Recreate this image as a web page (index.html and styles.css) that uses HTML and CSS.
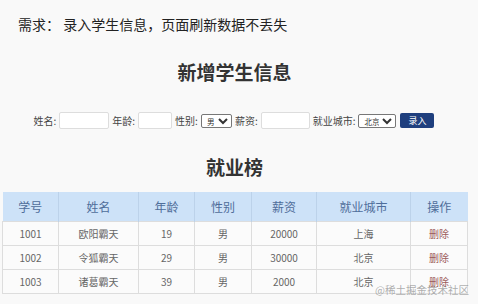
FILE: index.html
```html
<!DOCTYPE html>
<html>
<head>
  <title>学生信息管理</title>
  <link rel="stylesheet" href="styles.css">
</head>
<body>
  <div class="page">
    <p class="need">需求： 录入学生信息，页面刷新数据不丢失</p>

    <h3 class="title">新增学生信息</h3>
    <form class="info">
      <label>姓名:</label>
      <input type="text" class="uname">
      <label>年龄:</label>
      <input type="text" class="age">
      <label>性别:</label>
      <select class="gender">
        <option>男</option>
        <option>女</option>
      </select>
      <label>薪资:</label>
      <input type="text" class="salary">
      <label>就业城市:</label>
      <select class="city">
        <option>北京</option>
        <option>上海</option>
      </select>
      <button type="button" class="add">录入</button>
    </form>

    <h3 class="title rank">就业榜</h3>
    <table>
      <thead>
        <tr>
          <th class="c1">学号</th>
          <th class="c2">姓名</th>
          <th class="c3">年龄</th>
          <th class="c4">性别</th>
          <th class="c5">薪资</th>
          <th class="c6">就业城市</th>
          <th class="c7">操作</th>
        </tr>
      </thead>
      <tbody>
        <tr>
          <td>1001</td><td>欧阳霸天</td><td>19</td><td>男</td><td>20000</td><td>上海</td>
          <td><a href="javascript:;" class="del">删除</a></td>
        </tr>
        <tr>
          <td>1002</td><td>令狐霸天</td><td>29</td><td>男</td><td>30000</td><td>北京</td>
          <td><a href="javascript:;" class="del">删除</a></td>
        </tr>
        <tr>
          <td>1003</td><td>诸葛霸天</td><td>39</td><td>男</td><td>2000</td><td>北京</td>
          <td><a href="javascript:;" class="del">删除</a></td>
        </tr>
      </tbody>
    </table>
    <span class="mark">@稀土掘金技术社区</span>
  </div>
</body>
</html>
```

FILE: styles.css
```css
* {
  margin: 0;
  padding: 0;
  box-sizing: border-box;
}

html, body {
  height: 100%;
}

body {
  font-family: "Noto Sans CJK SC", "Microsoft YaHei", sans-serif;
  background-color: #f9f9f9;
  color: #333;
  overflow: hidden;
}

.page {
  position: relative;
  width: 465px;
  height: 304px;
  margin-left: 2px;
}

.need {
  font-size: 14px;
  line-height: 20px;
  padding: 14px 0 0 16px;
  color: #222;
}

.title {
  text-align: center;
  font-size: 19px;
  line-height: 26px;
  font-weight: bold;
  color: #333;
  margin-top: 25px;
}

.info {
  display: flex;
  align-items: center;
  justify-content: center;
  margin-top: 27px;
  font-size: 10px;
  color: #444;
  padding-right: 4px;
}

.info label {
  margin: 0 3px 0 3px;
}

.info input {
  height: 17px;
  border: 1px solid #ddd;
  border-radius: 2px;
  background: #fff;
  outline: none;
}

.uname {
  width: 50px;
}

.age {
  width: 34px;
}

.salary {
  width: 49px;
}

.info select {
  height: 14px;
  padding: 0 0 0 1px;
  font-size: 7.5px;
  font-family: inherit;
  border: 1px solid #777;
  border-radius: 2px;
  background: #fff;
  color: #333;
}

.add {
  width: 34px;
  height: 15px;
  margin-left: 4px;
  border: none;
  border-radius: 2px;
  background-color: #1f3f7e;
  color: #fff;
  font-size: 9px;
  font-family: inherit;
}

.rank {
  margin-top: 25px;
}

table {
  width: 465px;
  margin-top: 12px;
  border-collapse: collapse;
  table-layout: fixed;
  text-align: center;
}

th {
  height: 29px;
  background-color: #cde2f8;
  color: #4f6d9a;
  font-size: 12px;
  font-weight: normal;
  border-left: 1px solid #bcd2ea;
}

th:first-child {
  border-left: none;
}

td {
  height: 24px;
  font-size: 10px;
  color: #666;
  background-color: #fbfbfb;
  border: 1px solid #ddd;
}

.c1 { width: 56px; }
.c2 { width: 80px; }
.c3 { width: 56px; }
.c4 { width: 57px; }
.c5 { width: 65px; }
.c6 { width: 94px; }
.c7 { width: 57px; }

.del {
  color: #9b5a5a;
  text-decoration: none;
}

.mark {
  position: absolute;
  right: -2px;
  top: 282px;
  font-size: 10.5px;
  color: rgba(120, 120, 120, 0.6);
}
```
